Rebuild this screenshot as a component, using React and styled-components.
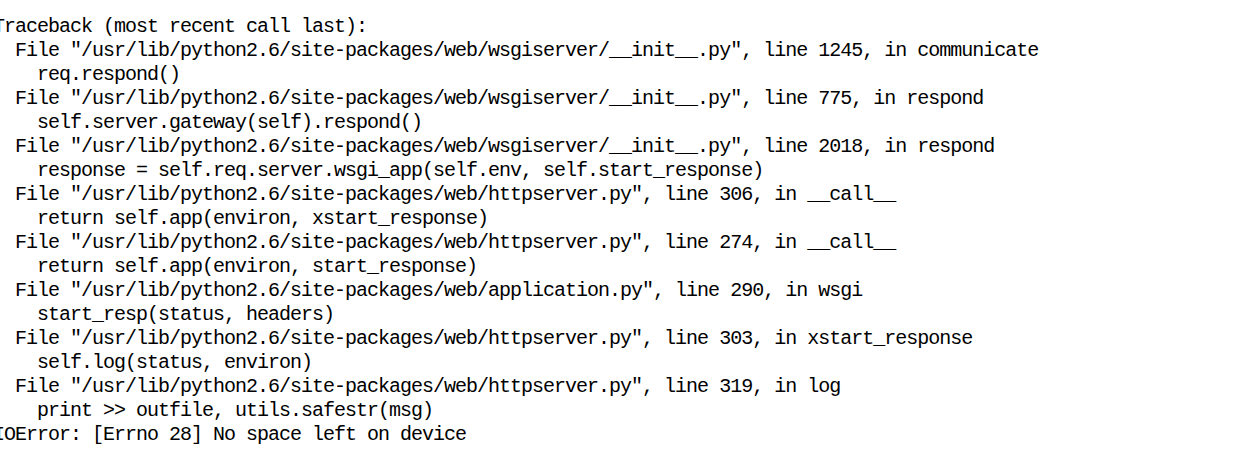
import React from "react";
import styled, { createGlobalStyle } from "styled-components";

const Global = createGlobalStyle`
  html, body { margin: 0; padding: 0; background: #ffffff; overflow: hidden; }
`;

const Console = styled.div`
  width: 1237px;
  height: 455px;
  overflow: hidden;
  background: #ffffff;
`;

const Output = styled.pre`
  margin: 0 0 0 -7px;
  padding: 15px 0 0 0;
  font-family: "Liberation Mono", "Noto Sans CJK SC", monospace;
  font-size: 20px;
  letter-spacing: -1px;
  line-height: 24px;
  color: #000000;
  white-space: pre;
`;

const Line = styled.div`
  padding-left: ${(p) => p.$indent * 11}px;
  height: 24px;
`;

const P = "/usr/lib/python2.6/site-packages/web/";

const lines = [
  [0, "Traceback (most recent call last):"],
  [2, `File "${P}wsgiserver/__init__.py", line 1245, in communicate`],
  [4, "req.respond()"],
  [2, `File "${P}wsgiserver/__init__.py", line 775, in respond`],
  [4, "self.server.gateway(self).respond()"],
  [2, `File "${P}wsgiserver/__init__.py", line 2018, in respond`],
  [4, "response = self.req.server.wsgi_app(self.env, self.start_response)"],
  [2, `File "${P}httpserver.py", line 306, in __call__`],
  [4, "return self.app(environ, xstart_response)"],
  [2, `File "${P}httpserver.py", line 274, in __call__`],
  [4, "return self.app(environ, start_response)"],
  [2, `File "${P}application.py", line 290, in wsgi`],
  [4, "start_resp(status, headers)"],
  [2, `File "${P}httpserver.py", line 303, in xstart_response`],
  [4, "self.log(status, environ)"],
  [2, `File "${P}httpserver.py", line 319, in log`],
  [4, "print >> outfile, utils.safestr(msg)"],
  [0, "IOError: [Errno 28] No space left on device"],
];

export default function App() {
  return (
    <Console>
      <Global />
      <Output>
        {lines.map(([indent, text], i) => (
          <Line key={i} $indent={indent}>
            {text}
          </Line>
        ))}
      </Output>
    </Console>
  );
}
